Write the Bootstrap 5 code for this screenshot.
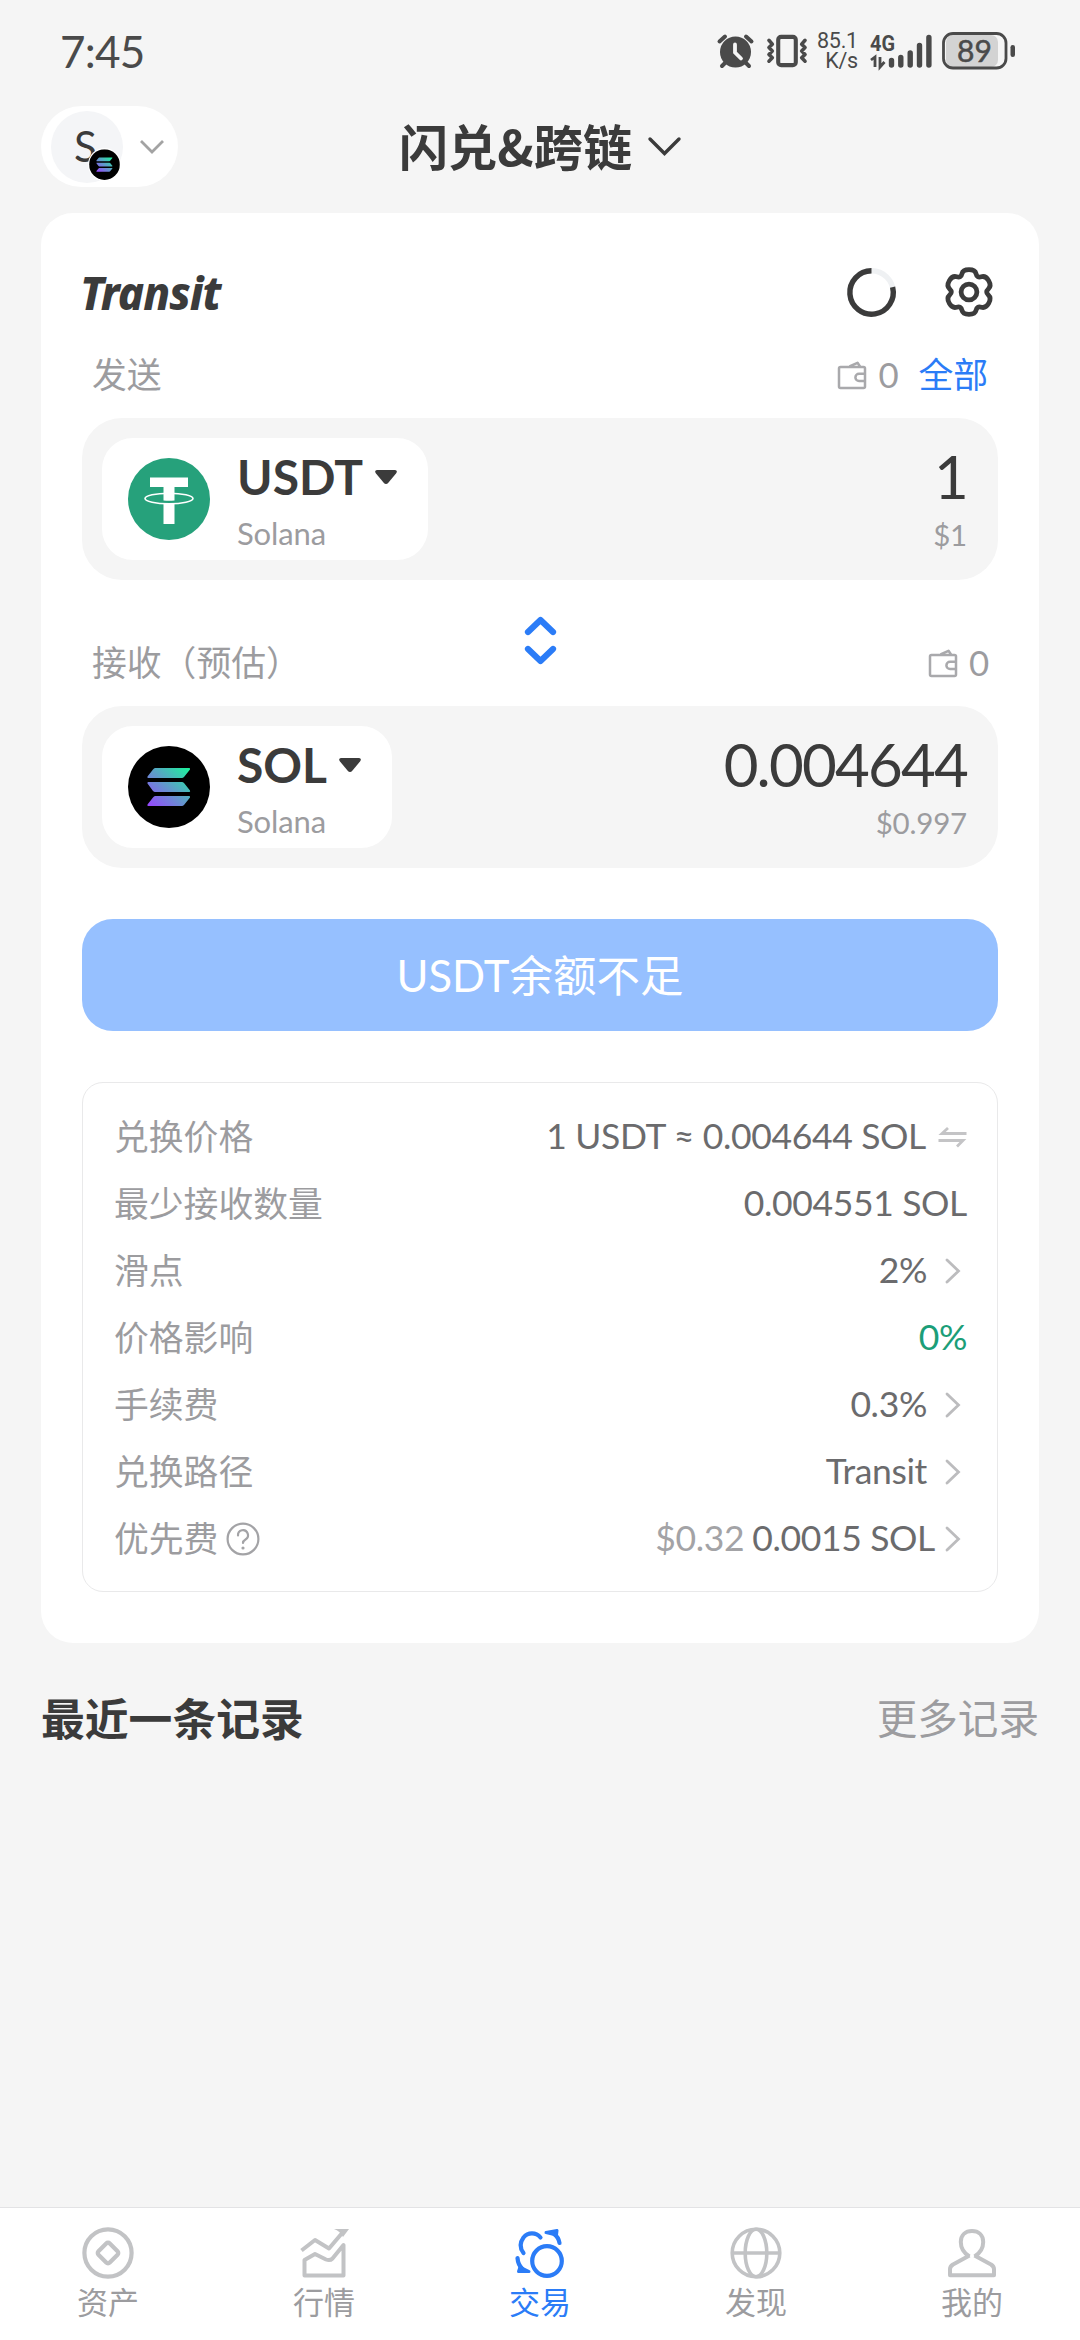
<!DOCTYPE html>
<html lang="zh-CN">
<head>
<meta charset="utf-8">
<meta name="viewport" content="width=device-width, initial-scale=1">
<title>闪兑&amp;跨链</title>
<link href="https://cdn.jsdelivr.net/npm/bootstrap@5.3.0/dist/css/bootstrap.min.css" rel="stylesheet">
<style>
  :root { --ink:#3b3b3b; --soft:#9c9c9f; --val:#6b6b6d; --blue:#2b7cf7; --bg:#f5f5f5; }
  html, body { height:2340px; }
  body { width:1080px; margin:0; overflow:hidden; background:var(--bg); color:var(--ink);
    font-family:Lato,"Noto Sans CJK SC",sans-serif; font-size:34.8px; line-height:1.2; }
  svg { display:block; flex:none; overflow:visible; }
  .statusbar { height:100px; padding:2px 64px 0 60px; color:#4a4a4a; }
  .clock { font-size:44px; letter-spacing:-.8px; }
  .netspeed { width:42px; font-size:21.5px; letter-spacing:-.2px; font-family:Roboto,sans-serif; text-align:right; }
  .netspeed div { line-height:20px; height:20px; }
  .net4g { font-family:Roboto,sans-serif; font-weight:700; }
  .topbar { height:113px; padding:6px 41px 26px; }
  .side { flex:1 1 0; }
  .wallet-pill { width:137px; height:81px; background:#fff; border-radius:41px; padding:0 13px 0 10px; }
  .avatar { width:72px; height:72px; border-radius:50%; background:#f4f5f7; font-size:42px; }
  .avatar .initial { margin-left:-3px; }
  .avatar svg { right:2px; bottom:2px; }
  .page-title { font-family:"Noto Sans CJK SC",sans-serif; font-size:49.2px; line-height:56px; font-weight:700; margin-top:-4px; }
  .swap-card { height:1430px; margin:0 41px; padding:54px 41px 51px; background:#fff; border-radius:32px; }
  .brand { height:50px; }
  .brandname { font:italic 800 45.5px/52px "Noto Sans","Open Sans",sans-serif; transform:scaleX(.97); transform-origin:0 50%; letter-spacing:-1px; margin-left:-2px; }
  .labelrow { padding:0 10px; color:var(--soft); }
  .labelrow.send { height:101px; padding-top:15px; }
  .labelrow.recv { height:126px; padding-top:40px; }
  .bal { width:19px; margin-left:3px; }
  .all { margin-left:21px; }
  .swapicon { left:441px; top:35px; }
  .tokenbox { height:162px; background:var(--bg); border-radius:40px; padding:20px 31px 20px 20px; }
  .tokensel { height:122px; background:#fff; border-radius:31px; padding:0 31px 0 26px; gap:27px; }
  .symbol { font-size:48px; line-height:58px; font-weight:700; gap:12px; padding-top:1px; }
  .chain { font-size:31px; line-height:36px; color:var(--soft); margin-top:9px; letter-spacing:-.1px; }
  .amount { font-size:60px; line-height:70px; letter-spacing:-1.8px; margin-top:-1px; }
  .fiat { font-size:29.5px; line-height:36px; color:var(--soft); margin-top:6px; letter-spacing:-.2px; }
  .btn-swap { height:112px; margin-top:51px; border:0; border-radius:31px; font-size:43.5px; padding-top:8px; }
  .btn-swap:disabled { color:#fff; background:#96c0ff; opacity:1; }
  .details { height:510px; margin-top:51px; border:1.5px solid #e9e9ea; border-radius:21px; padding:20px 30px 17px 31px; }
  .detail { height:67px; color:var(--soft); }
  .detail .v { color:var(--val); font-size:35.5px; letter-spacing:-.35px; }
  .history { margin:0 41px; height:153px; font-size:40.6px; color:var(--soft); }
  .history h2 { font-size:43.8px; color:var(--ink); }
  .tabs { height:133px; border-top:1.5px solid #e3e3e5; background:#fff; }
  .tabs a { color:var(--soft); font-size:31px; line-height:38px; text-decoration:none; padding-top:19px; }
  .tabs svg { color:#c2c3c5; margin-bottom:4px; }
  .tabs a.active, .tabs a.active svg { color:var(--blue); }
</style>
</head>
<body class="d-flex flex-column">
<svg width="0" height="0" class="position-absolute">
  <defs>
    <linearGradient id="solgrad" gradientUnits="userSpaceOnUse" x1="22" y1="62" x2="60" y2="20">
      <stop offset="0" stop-color="#9945ff"/><stop offset=".5" stop-color="#5f9bc9"/><stop offset="1" stop-color="#19f59b"/>
    </linearGradient>
    <symbol id="sol" viewBox="0 0 82 82">
      <circle cx="41" cy="41" r="41" fill="#000"/>
      <path fill="url(#solgrad)" d="M27 22H61.5Q62.500 22.500 62 23.500L56 31Q55 32 54 32H20Q19 31.500 19.500 30.500L25 23.500Q26 22 27 22ZM20 36H54Q55 36 56 37L62 44.500Q62.500 45.500 61.500 46H27Q26 46 25 45L19.500 37.500Q19 36.500 20 36ZM27 50H61.500Q62.500 50.500 62 51.500L56 59Q55 60 54 60H20Q19 59.500 19.500 58.500L25 51.500Q26 50 27 50Z"/>
    </symbol>
    <symbol id="wallet" viewBox="0 0 29 29">
      <g fill="none" stroke="#a9a9ac" stroke-width="2.500" stroke-linejoin="round">
        <rect x="1.500" y="6" width="26" height="21" rx="1.500"/>
        <path d="M12 5.500L20 1.800L22.500 5.500M27.500 12.800H21.500A3.600 3.600 0 0 0 21.500 20H27.500"/>
      </g>
    </symbol>
    <symbol id="next" viewBox="0 0 16 26">
      <path d="M2 2L13.500 13L2 24" fill="none" stroke="#bcbcbe" stroke-width="2.800" stroke-linecap="round"/>
    </symbol>
    <symbol id="caret" viewBox="0 0 22 15">
      <path d="M2 0H20Q23 .5 21 3.500L13.500 12.500Q11 15.500 8.500 12.500L1 3.500Q-1 .5 2 0Z" fill="#3b3b3b"/>
    </symbol>
  </defs>
</svg>

<header class="statusbar d-flex align-items-center justify-content-between">
  <div class="clock">7:45</div>
  <div class="d-flex align-items-center">
    <svg width="37" height="36" viewBox="0 0 37 36" fill="none" stroke="#4a4a4a" stroke-linecap="round">
      <circle cx="18.500" cy="19" r="15.500" fill="#4a4a4a" stroke="none"/>
      <path d="M2.500 8.500L8 3.500M34.500 8.500L29 3.500M8 30L5 33M29 30L32 33" stroke-width="4"/>
      <path d="M18 11.500V19.500L24 25.500" stroke="#f5f5f5" stroke-width="3.800"/>
    </svg>
    <svg class="ms-2 ps-1" width="46" height="36" viewBox="0 0 43 36" fill="none" stroke="#4a4a4a" stroke-width="3.600" stroke-linejoin="round" stroke-linecap="round">
      <rect x="12.500" y="3.500" width="18" height="29" rx="3" stroke-width="4.200"/>
      <path d="M3 7L6.500 11L3 14.500L6.500 18L3 21.500L6.500 25L3 28.500M40 7L36.500 11L40 14.500L36.500 18L40 21.500L36.500 25L40 28.500"/>
    </svg>
    <div class="netspeed ms-2"><div>85.1</div><div>K/s</div></div>
    <svg class="ms-2 ps-1" width="68" height="36" viewBox="0 0 64 36">
      <text class="net4g" x="0" y="18" font-size="22" textLength="25" lengthAdjust="spacingAndGlyphs" fill="#4a4a4a">4G</text>
      <g stroke="#4a4a4a" stroke-width="2.800" fill="none"><path d="M1 27L5 24V34M10 24V34L14.500 29"/></g>
      <g stroke="#4a4a4a" stroke-width="5.400" stroke-linecap="round"><path d="M21.500 27.500V32M30.800 24.500V32M40.200 20V32M49.500 12.500V32M58.900 4.500V32"/></g>
    </svg>
    <svg class="ms-2" width="74" height="38" viewBox="0 0 74 38">
      <rect x="4" y="3" width="52" height="32" rx="7" fill="#d3d3d3"/>
      <rect x="1.500" y="1.500" width="62.500" height="34.500" rx="9.500" fill="none" stroke="#4a4a4a" stroke-width="2.800"/>
      <rect x="68.500" y="13" width="4.500" height="12" rx="2.200" fill="#4a4a4a"/>
      <text x="32.500" y="29.500" text-anchor="middle" font-size="30" font-family="Lato" font-weight="400" stroke="#4a4a4a" stroke-width=".5" fill="#4a4a4a">89</text>
    </svg>
  </div>
</header>

<nav class="topbar d-flex align-items-center">
  <div class="side">
    <div class="wallet-pill d-flex align-items-center justify-content-between">
      <div class="avatar position-relative d-flex align-items-center justify-content-center">
        <span class="initial">S</span>
        <svg class="position-absolute" width="33" height="33" viewBox="-3 -3 88 88"><circle cx="41" cy="41" r="44" fill="#fff"/><use href="#sol" width="82" height="82"/></svg>
      </div>
      <svg width="26" height="16" viewBox="0 0 26 16"><path d="M2 2L13 13L24 2" fill="none" stroke="#a3a3a3" stroke-width="2.800"/></svg>
    </div>
  </div>
  <div class="d-flex align-items-center">
    <span class="page-title">闪兑&amp;跨链</span>
    <svg class="ms-3" width="33" height="20" viewBox="0 0 33 20"><path d="M2 2L16.500 16.500L31 2" fill="none" stroke="#3b3b3b" stroke-width="3.400" stroke-linecap="round"/></svg>
  </div>
  <div class="side"></div>
</nav>

<main class="swap-card">
  <div class="brand d-flex align-items-center justify-content-between">
    <span class="brandname">Transit</span>
    <div class="d-flex align-items-center gap-5 pe-1">
      <svg width="49" height="49" viewBox="0 0 49 49" fill="none" stroke-width="5.400">
        <circle cx="24.500" cy="24.500" r="21.700" stroke="#eff1f3"/>
        <path d="M45.600 19.200A21.700 21.700 0 1 1 24.500 2.800" stroke="#3b3b3b"/>
      </svg>
      <svg width="50" height="50" viewBox="0 0 50 50" fill="none" stroke="#3b3b3b" stroke-width="4.800">
        <circle cx="25" cy="25" r="7.900"/>
        <path stroke-linejoin="round" d="M44.350 28.050Q41 25 44.350 21.950Q47.700 18.900 44.650 13.650Q41.600 8.400 37.300 9.750Q33 11.100 32.050 6.700Q31.100 2.600 25 2.600Q18.900 2.600 17.950 6.700Q17 11.100 12.700 9.750Q8.400 8.400 5.350 13.650Q2.300 18.900 5.650 21.950Q9 25 5.650 28.050Q2.300 31.100 5.350 36.350Q8.400 41.600 12.700 40.250Q17 38.900 17.950 43.300Q18.900 47.400 25 47.400Q31.100 47.400 32.050 43.300Q33 38.900 37.300 40.250Q41.600 41.600 44.650 36.350Q47.700 31.100 44.350 28.050Z"/>
      </svg>
    </div>
  </div>

  <div class="labelrow send d-flex align-items-center justify-content-between">
    <span>发送</span>
    <div class="d-flex align-items-center">
      <svg class="me-2" width="30" height="29"><use href="#wallet"/></svg>
      <span class="bal">0</span>
      <span class="all text-nowrap" style="color:var(--blue)">全部</span>
    </div>
  </div>

  <section class="tokenbox d-flex justify-content-between">
    <div class="tokensel d-flex align-items-center">
      <svg width="82" height="82" viewBox="0 0 82 82">
        <circle cx="41" cy="41" r="41" fill="#26a17b"/>
        <ellipse cx="41" cy="40.500" rx="24" ry="5.200" fill="none" stroke="#fff" stroke-width="1.600"/>
        <path fill="#fff" d="M22 19.500H60V29H46.500V42.500Q41 43.200 35.500 42.500V29H22ZM35.500 45Q41 45.700 46.500 45V66H35.500Z"/>
      </svg>
      <div>
        <div class="symbol d-flex align-items-center">USDT<svg width="22" height="15"><use href="#caret"/></svg></div>
        <div class="chain">Solana</div>
      </div>
    </div>
    <div class="text-end pt-1"><div class="amount">1</div><div class="fiat">$1</div></div>
  </section>

  <div class="labelrow recv position-relative d-flex align-items-center justify-content-between">
    <span>接收（预估）</span>
    <svg class="swapicon position-absolute" width="34" height="51" viewBox="0 0 34 51" fill="none" stroke="#2b7cf7" stroke-width="6.200" stroke-linecap="round" stroke-linejoin="round">
      <path d="M5 17L17.500 5L30 17M5 34L17.500 46L30 34"/>
    </svg>
    <div class="d-flex align-items-center">
      <svg class="me-2" width="30" height="29"><use href="#wallet"/></svg>
      <span class="bal">0</span>
    </div>
  </div>

  <section class="tokenbox d-flex justify-content-between">
    <div class="tokensel d-flex align-items-center">
      <svg width="82" height="82"><use href="#sol"/></svg>
      <div>
        <div class="symbol d-flex align-items-center">SOL<svg width="22" height="15"><use href="#caret"/></svg></div>
        <div class="chain">Solana</div>
      </div>
    </div>
    <div class="text-end pt-1"><div class="amount">0.004644</div><div class="fiat">$0.997</div></div>
  </section>

  <button class="btn btn-swap w-100" disabled>USDT余额不足</button>

  <section class="details">
    <div class="detail d-flex align-items-center justify-content-between"><span>兑换价格</span>
      <span class="v d-flex align-items-center">1 USDT ≈ 0.004644 SOL
        <svg class="ms-2 ps-1" width="33" height="22" viewBox="0 0 28 22"><path d="M9.500 2L3.500 7.500H28M0 14.500H24.500L18.500 20.500" fill="none" stroke="#c4c4c6" stroke-width="2.800"/></svg></span></div>
    <div class="detail d-flex align-items-center justify-content-between"><span>最少接收数量</span><span class="v">0.004551 SOL</span></div>
    <div class="detail d-flex align-items-center justify-content-between"><span>滑点</span>
      <span class="v d-flex align-items-center">2%<svg class="ms-3 me-1" width="20" height="26"><use href="#next"/></svg></span></div>
    <div class="detail d-flex align-items-center justify-content-between"><span>价格影响</span><span class="v" style="color:#1b9e78">0%</span></div>
    <div class="detail d-flex align-items-center justify-content-between"><span>手续费</span>
      <span class="v d-flex align-items-center">0.3%<svg class="ms-3 me-1" width="20" height="26"><use href="#next"/></svg></span></div>
    <div class="detail d-flex align-items-center justify-content-between"><span>兑换路径</span>
      <span class="v d-flex align-items-center">Transit<svg class="ms-3 me-1" width="20" height="26"><use href="#next"/></svg></span></div>
    <div class="detail d-flex align-items-center justify-content-between">
      <span class="d-flex align-items-center">优先费
        <svg class="ms-2" width="34" height="34" viewBox="0 0 34 34" fill="none" stroke="#a3a3a6" stroke-width="2.200" stroke-linecap="round"><circle cx="17" cy="17" r="15.400"/><path d="M12 13.500A5 5 0 1 1 19.500 17.500Q17 19 17 21"/><circle cx="17" cy="26" r=".8" fill="#a3a3a6" stroke-width="1.600"/></svg></span>
      <span class="v d-flex align-items-center"><span class="me-2" style="color:#a3a3a6">$0.32</span>0.0015 SOL<svg class="ms-2 me-1" width="20" height="26"><use href="#next"/></svg></span></div>
  </section>
</main>

<section class="history d-flex align-items-center justify-content-between">
  <h2 class="m-0 fw-bold">最近一条记录</h2><span>更多记录</span>
</section>

<footer class="tabs d-flex mt-auto">
  <a href="#" class="col d-flex flex-column align-items-center">资产
    <svg class="order-first" width="52" height="52" viewBox="0 0 52 52" fill="none" stroke="currentColor" stroke-width="4.200"><circle cx="26" cy="26" r="23.600"/><rect x="18" y="18" width="16" height="16" rx="2.500" transform="rotate(45 26 26)"/></svg></a>
  <a href="#" class="col d-flex flex-column align-items-center">行情
    <svg class="order-first" width="52" height="52" viewBox="-2 -2 52 52" fill="none" stroke="currentColor" stroke-width="4"><path stroke-linejoin="round" d="M1.500 21.500L15 11L29 19.500L43 3M4.500 31L15 25L26 30.500Q30 32 32.500 29.500L43.500 16V46.500H4.500Z"/><path d="M34 0H49L43 8Q40 2 34 0Z" fill="currentColor" stroke="none"/></svg></a>
  <a href="#" class="col d-flex flex-column align-items-center active">交易
    <svg class="order-first" width="52" height="52" viewBox="-2 -2 52 52" fill="none" stroke="currentColor" stroke-width="4.200" stroke-linecap="round" stroke-linejoin="round"><circle cx="31" cy="32" r="14.800"/><path d="M24.500 8.500C20 3.200 12 3 7.500 8.500C3.500 14 4 19.500 7.500 24M43.500 14Q42.500 8 38 5M1.500 29Q2 36 6.500 40"/><path stroke-width="3" fill="currentColor" d="M30 3.500L41 1.500L40.500 6ZM2.500 42.500H13L4 38Z"/></svg></a>
  <a href="#" class="col d-flex flex-column align-items-center">发现
    <svg class="order-first" width="52" height="52" viewBox="0 0 52 52" fill="none" stroke="currentColor" stroke-width="3.600"><circle cx="26" cy="26" r="23.800"/><ellipse cx="26" cy="26" rx="10.800" ry="23.800"/><path d="M2 26H50"/></svg></a>
  <a href="#" class="col d-flex flex-column align-items-center">我的
    <svg class="order-first" width="52" height="52" viewBox="-2 -2 52 52" fill="none" stroke="currentColor" stroke-width="4" stroke-linejoin="round"><path d="M21.500 27.500C14 23 12.800 18 12.800 13C12.800 6 17.500 2 24 2S35.200 6 35.200 13C35.200 18 34 23 26.500 27.500M21.500 26.500L5 35.500Q2 37.500 2 40V46.200H46V40Q46 37.500 43 35.500L26.500 26.500"/></svg></a>
</footer>
<script src="https://cdn.jsdelivr.net/npm/bootstrap@5.3.0/dist/js/bootstrap.bundle.min.js"></script>
</body>
</html>
